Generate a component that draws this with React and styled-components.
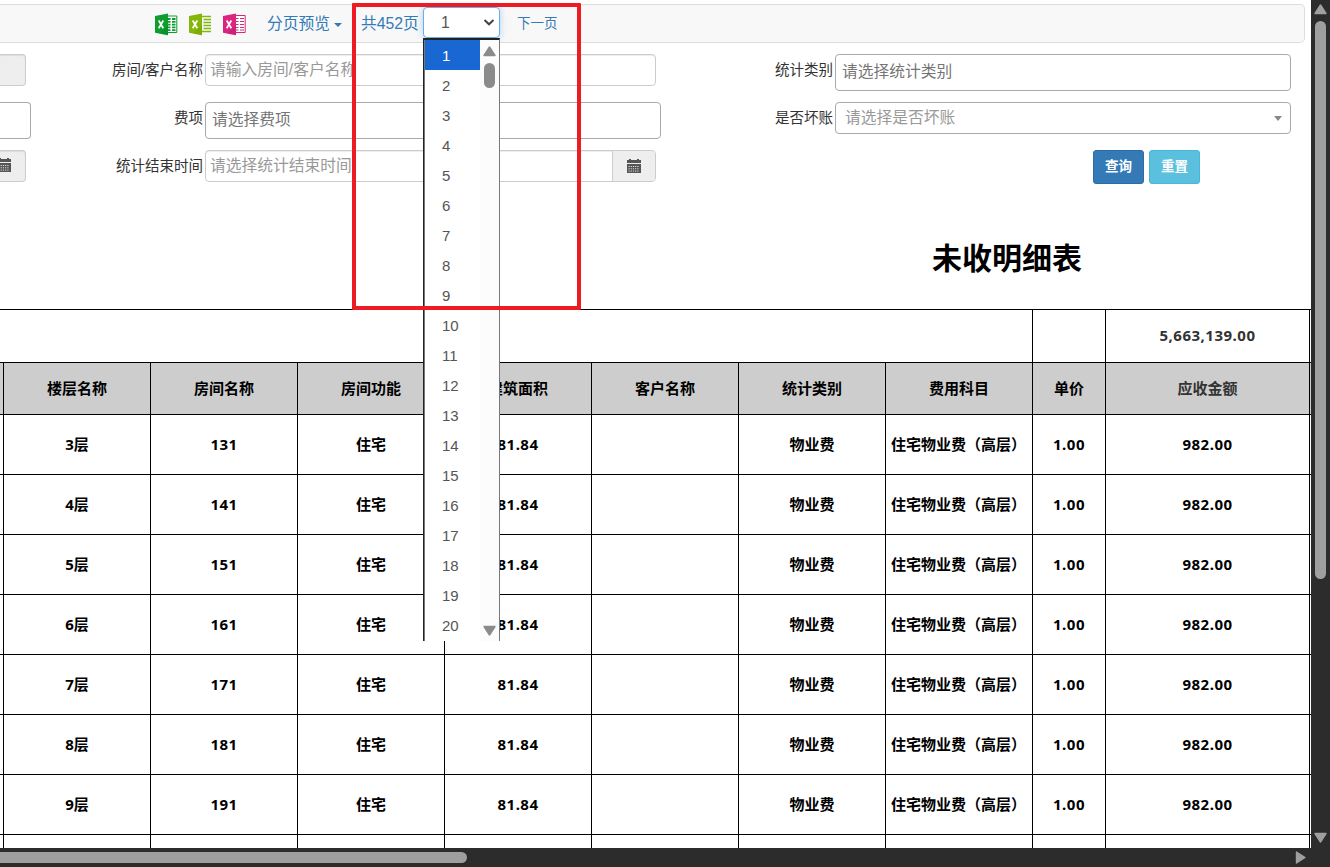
import React from "react";
import styled, { createGlobalStyle } from "styled-components";

const SANS = '"Liberation Sans", "Noto Sans CJK SC", sans-serif';
const TABLE_FONT = '"Noto Sans", "Noto Sans CJK SC", sans-serif';

const GlobalStyle = createGlobalStyle`
  * {
    box-sizing: border-box;
  }
  body {
    margin: 0;
    overflow: hidden;
    background: #fff;
    font-family: ${SANS};
  }
`;

const Screen = styled.div`
  position: relative;
  display: grid;
  grid-template-columns: 1311px 19px;
  grid-template-rows: 848px 19px;
  width: 1330px;
  height: 867px;
  overflow: hidden;
  background: #2c2c2c;
`;

const Page = styled.main`
  overflow: hidden;
  background: #fff;
  padding-top: 4px;
`;

/* Toolbar */
const Toolbar = styled.div`
  display: flex;
  align-items: center;
  width: 1305px;
  height: 39px;
  padding: 0 0 2px 154px;
  background: #f8f8f8;
  border: 1px solid #ddd;
  border-left: 0;
  border-radius: 0 5px 5px 0;
  color: #337ab7;
  font-size: 15.75px;
  white-space: nowrap;
`;

const IconRow = styled.div`
  display: flex;
  gap: 9px;
  width: 113px;
  padding-top: 4px;
`;

const Preview = styled.div`
  display: flex;
  align-items: center;
  width: 94px;
`;

const Caret = styled.span`
  margin: 4px 0 0 4px;
  border-top: 4px solid #337ab7;
  border-left: 4px solid transparent;
  border-right: 4px solid transparent;
`;

const Total = styled.div`
  width: 62px;
`;

const PageSelect = styled.div`
  display: flex;
  align-items: center;
  justify-content: space-between;
  width: 77px;
  height: 31px;
  padding: 0 4px 0 17px;
  background: #fff;
  border: 1px solid #66afe9;
  border-radius: 4px;
  box-shadow: 0 0 7px rgba(102, 175, 233, 0.5);
  color: #555;
  font-size: 15.75px;
  line-height: 31px;
`;

const Next = styled.div`
  margin: 0 0 2px 17px;
  font-size: 13.5px;
`;

/* Search form */
const Form = styled.div`
  display: grid;
  grid-template-columns: 31px 174px 456px 174px 456px;
  grid-auto-rows: 48px;
  align-items: start;
  padding-top: 11px;
  height: 155px;
`;

const Label = styled.div`
  padding: 1px 2px 0 0;
  text-align: right;
  color: #333;
  font-size: 14.5px;
  line-height: 31px;
`;

const Field = styled.div`
  display: flex;
  align-items: center;
  justify-content: space-between;
  width: ${(p) => p.$width || "451px"};
  height: ${(p) => (p.$tall ? "37px" : "32px")};
  padding: ${(p) => p.$pad || "0 0 3px 4px"};
  overflow: hidden;
  background: ${(p) => (p.$disabled ? "#eee" : "#fff")};
  border: 1px solid ${(p) => (p.$dark ? "#aaa" : "#ccc")};
  ${(p) => p.$cut && "border-left: 0;"}
  border-radius: ${(p) => (p.$cut ? "0 4px 4px 0" : "4px")};
  box-shadow: ${(p) => (p.$dark ? "none" : "inset 0 1px 1px rgba(0, 0, 0, 0.075)")};
  color: ${(p) => p.$color || "#999"};
  font-size: 15.75px;
  white-space: nowrap;
`;

const Placeholder = styled.span`
  padding-bottom: 3px;
`;

const DateAddon = styled.span`
  display: flex;
  align-items: center;
  justify-content: center;
  align-self: stretch;
  width: 43px;
  padding-bottom: 1px;
  background: #eee;
  border-left: 1px solid #ccc;
`;

const Arrow = styled.span`
  margin-right: 8px;
  border-top: 5px solid #888;
  border-left: 4px solid transparent;
  border-right: 4px solid transparent;
`;

const Buttons = styled.div`
  display: flex;
  gap: 5px;
  padding-left: 258px;
`;

const Button = styled.button`
  width: 51px;
  height: 34px;
  padding: 0 0 4px;
  background: ${(p) => (p.$info ? "#5bc0de" : "#337ab7")};
  border: 1px solid ${(p) => (p.$info ? "#46b8da" : "#2e6da4")};
  border-radius: 3px;
  color: #fff;
  font: bold 13.5px ${SANS};
`;

const Title = styled.h1`
  height: 111px;
  margin: 0;
  padding-left: 932px;
  color: #000;
  font-size: 30px;
  line-height: 122px;
  white-space: nowrap;
`;

/* Report table */
const Table = styled.table`
  width: 1457px;
  margin-left: -143px;
  table-layout: fixed;
  border-collapse: separate;
  border-spacing: 0;
  border-top: 1px solid #000;
  color: #000;
  font-family: ${TABLE_FONT};
  font-size: 15px;
  font-weight: bold;
`;

const Cell = styled.td`
  height: ${(p) => p.$height || 60}px;
  padding: ${(p) => (p.$left ? "0 0 2px 5px" : "0 0 2px")};
  overflow: hidden;
  border-right: 1px solid #000;
  border-bottom: 1px solid #000;
  background: ${(p) => (p.$head ? "#cdcdcd" : "#fff")};
  color: ${(p) => p.$color || "#000"};
  text-align: ${(p) => (p.$left ? "left" : "center")};
  letter-spacing: ${(p) => (p.$num ? "0.5px" : "0")};
  line-height: 20px;
  white-space: nowrap;
`;

/* Page number list lying over the form and the table */
const List = styled.div`
  position: absolute;
  left: 423px;
  top: 38px;
  display: flex;
  width: 77px;
  height: 603px;
  background: #fff;
  border-top: 2px solid #222;
  border-left: 1px solid #222;
  border-right: 1px solid #777;
  box-shadow: inset 1px 0 0 #777;
`;

const Options = styled.div`
  flex: 1;
  padding-left: 1px;
`;

const Option = styled.div`
  height: 30px;
  padding-left: 17px;
  background: ${(p) => (p.$active ? "#1967d2" : "#fff")};
  color: ${(p) => (p.$active ? "#fff" : "#555")};
  font-size: 15px;
  line-height: 32px;
`;

const ListBar = styled.div`
  display: flex;
  flex-direction: column;
  align-items: center;
  justify-content: space-between;
  width: 19px;
  padding: 6px 0 5px;
  background: #fcfcfc;
`;

const ListThumb = styled.div`
  width: 11px;
  height: 25px;
  margin: 6px 0 auto;
  background: #8b8b8b;
  border-radius: 6px;
`;

const Highlight = styled.div`
  position: absolute;
  left: 352px;
  top: 3px;
  width: 229px;
  height: 307px;
  border: 4px solid #ed1c24;
  border-radius: 1px;
`;

/* Window scrollbars */
const VBar = styled.div`
  display: flex;
  flex-direction: column;
  align-items: center;
  padding: 4px 0 5px;
`;

const VThumb = styled.div`
  width: 11px;
  height: 558px;
  margin: 6px 0 auto;
  background: #9f9f9f;
  border-radius: 6px;
`;

const HBar = styled.div`
  display: flex;
  align-items: center;
  justify-content: space-between;
  padding-right: 4px;
`;

const HThumb = styled.div`
  width: 467px;
  height: 11px;
  background: #9f9f9f;
  border-radius: 0 6px 6px 0;
`;

const Triangle = ({ color = "#9f9f9f", turn = 0 }) => (
  <svg width="13" height="11" viewBox="0 0 13 11" transform={`rotate(${turn})`}>
    <path
      d="M6.5 1 12 9.5H1Z"
      fill={color}
      stroke={color}
      strokeWidth="1.4"
      strokeLinejoin="round"
    />
  </svg>
);

const ExcelIcon = ({ color, dark, variant }) => (
  <svg width="25" height="23" viewBox="0 0 25 23">
    {variant === "grid" && (
      <>
        <path d="M13 3h9.8v16.5H13" fill="#fff" stroke={color} strokeWidth="1" />
        <path
          d="M14 6h2.5M18 6h3.5M14 8.8h2.5M18 8.8h3.5M14 11.6h2.5M18 11.6h3.5M14 14.4h2.5M18 14.4h3.5M14 17.2h2.5M18 17.2h3.5"
          stroke={color}
          strokeWidth="1.8"
        />
      </>
    )}
    {variant === "lines" && (
      <path
        d="M14 3.5h9M15.5 6.5H23M15.5 9.5H23M15.5 12.5H23M15.5 15.5H23M14 18.5h9"
        stroke={color}
        strokeWidth="1.7"
      />
    )}
    {variant === "page" && (
      <>
        <path d="M13 2.5h10.2v17H13" fill="#fff" stroke={color} strokeWidth="1" />
        <path
          d="M14 5.5h2.5M18 5.5h4M14 8.5h2.5M18 8.5h4M14 11.5h2.5M18 11.5h4M14 14.5h2.5M18 14.5h4M14 17h2.5M18 17h4"
          stroke={color}
          strokeWidth="1.1"
        />
      </>
    )}
    <path d="M1 3 14 .5v21.8L1 19.8Z" fill={color} />
    <path d="M5 20.6 14 12v10.3Z" fill={dark} opacity=".25" />
    <path d="m4.7 7.5 4.6 7.8M9.3 7.5l-4.6 7.8" stroke="#fff" strokeWidth="1.7" />
  </svg>
);

const CalendarIcon = ({ cut = 0 }) => (
  <svg width={14 - cut} height="14" viewBox={`${cut} 0 ${14 - cut} 14`}>
    <path d="M0 1h2V0h2v1h6V0h2v1h2v3H0zM0 5h14v9H0z" fill="#555" />
    <path
      d="M1.5 7.5h11M1.5 9.8h11M1.5 12.1h11"
      stroke="#eee"
      strokeWidth=".9"
      strokeDasharray="1.2 1"
    />
  </svg>
);

const Chevron = () => (
  <svg width="12" height="8" viewBox="0 0 12 8">
    <path d="m1.5 1 4.5 4.3L10.500 1" fill="none" stroke="#444" strokeWidth="2" />
  </svg>
);

const columnWidths = [147, 147, 147, 147, 147, 147, 147, 147, 73, 204, 4];
const headers = [
  "",
  "楼层名称",
  "房间名称",
  "房间功能",
  "建筑面积",
  "客户名称",
  "统计类别",
  "费用科目",
  "单价",
  "应收金额",
  "",
];
const floors = [3, 4, 5, 6, 7, 8, 9];
const pages = Array.from({ length: 20 }, (_, i) => i + 1);

const Report = () => (
  <Table>
    <colgroup>
      {columnWidths.map((width, i) => (
        <col key={i} style={{ width }} />
      ))}
    </colgroup>
    <tbody>
      <tr>
        <Cell $height={53} colSpan={8} />
        <Cell $height={53} />
        <Cell $height={53} $num $color="#333">5,663,139.00</Cell>
        <Cell $height={53} />
      </tr>
      <tr>
        {headers.map((text, i) => (
          <Cell key={i} $head $height={52} $color={i === 9 ? "#333" : "#000"}>
            {text}
          </Cell>
        ))}
      </tr>
      {floors.map((floor) => (
        <tr key={floor}>
          <Cell />
          <Cell>{floor}层</Cell>
          <Cell $num>{101 + floor * 10}</Cell>
          <Cell>住宅</Cell>
          <Cell $num>81.84</Cell>
          <Cell />
          <Cell>物业费</Cell>
          <Cell $left>住宅物业费（高层）</Cell>
          <Cell $num>1.00</Cell>
          <Cell $num>982.00</Cell>
          <Cell />
        </tr>
      ))}
      <tr>
        {columnWidths.map((_, i) => (
          <Cell key={i} />
        ))}
      </tr>
    </tbody>
  </Table>
);

const SearchForm = () => (
  <Form>
    <Field $cut $disabled $width="26px" />
    <Label>房间/客户名称</Label>
    <Field>请输入房间/客户名称</Field>
    <Label>统计类别</Label>
    <Field $dark $tall $width="456px" $pad="0 0 5px 6px" $color="#757575">
      请选择统计类别
    </Field>

    <Field $cut $dark $tall $width="31px" />
    <Label>费项</Label>
    <Field $dark $tall $width="456px" $pad="0 0 5px 6px" $color="#757575">
      请选择费项
    </Field>
    <Label>是否坏账</Label>
    <Field $dark $width="456px" $pad="0 0 0 9px">
      <Placeholder>请选择是否坏账</Placeholder>
      <Arrow />
    </Field>

    <Field $cut $disabled $width="26px" $pad="0 0 2px">
      <CalendarIcon cut={3} />
    </Field>
    <Label>统计结束时间</Label>
    <Field $pad="0 0 0 4px">
      <Placeholder>请选择统计结束时间</Placeholder>
      <DateAddon>
        <CalendarIcon />
      </DateAddon>
    </Field>
    <span />
    <Buttons>
      <Button>查询</Button>
      <Button $info>重置</Button>
    </Buttons>
  </Form>
);

const App = () => {
  return (
    <Screen>
      <GlobalStyle />
      <Page>
        <Toolbar>
          <IconRow>
            <ExcelIcon color="#0f9d30" dark="#00701c" variant="grid" />
            <ExcelIcon color="#84b70b" dark="#608d00" variant="lines" />
            <ExcelIcon color="#d9267f" dark="#b30d61" variant="page" />
          </IconRow>
          <Preview>
            分页预览
            <Caret />
          </Preview>
          <Total>共452页</Total>
          <PageSelect>
            1
            <Chevron />
          </PageSelect>
          <Next>下一页</Next>
        </Toolbar>
        <SearchForm />
        <Title>未收明细表</Title>
        <Report />
      </Page>
      <VBar>
        <Triangle />
        <VThumb />
        <Triangle turn={180} />
      </VBar>
      <HBar>
        <HThumb />
        <Triangle turn={90} />
      </HBar>
      <List>
        <Options>
          {pages.map((n) => (
            <Option key={n} $active={n === 1}>
              {n}
            </Option>
          ))}
        </Options>
        <ListBar>
          <Triangle color="#8b8b8b" />
          <ListThumb />
          <Triangle color="#8b8b8b" turn={180} />
        </ListBar>
      </List>
      <Highlight />
    </Screen>
  );
};

export default App;
